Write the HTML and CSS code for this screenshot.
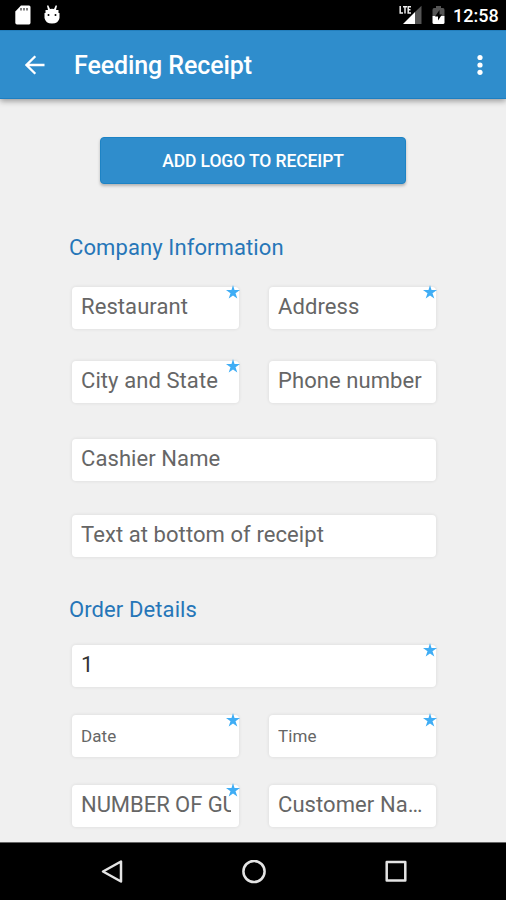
FILE: index.html
```html
<!DOCTYPE html>
<html lang="en">
<head>
<meta charset="utf-8">
<title>Feeding Receipt</title>
<link rel="stylesheet" href="styles.css">
</head>
<body>
<svg width="0" height="0" class="defs"><symbol id="star" viewBox="0 0 14 14"><path d="M7 0 8.500 5H14L9.500 8.200 11.300 13.500 7 10.400 2.700 13.500 4.500 8.200 0 5H5.500Z"/></symbol></svg>
<div class="screen">
  <div class="status">
    <svg class="sd" width="16" height="20" viewBox="0 0 16 20"><path fill="#fff" d="M6 .5H14Q15.500.5 15.500 2V17.500Q15.500 19.500 14 19.500H2Q.3 19.500.3 17.500V6.500Z"/><path d="M6 3V5.500M9 3V5.500M12 3V5.500" stroke="#555" stroke-width="1.500"/></svg>
    <svg class="bug" width="18" height="20" viewBox="0 0 18 20"><path fill="#fff" d="M4 .8 5.200.3 7 4Q9 3.500 11 4L12.800.3 14 .8 13 5H15.500V8H16.500V13Q15.500 18.500 9 18.500T1.500 13V8H2.500V5H5Z"/><circle cx="5.500" cy="10" r="1"/><circle cx="12.500" cy="10" r="1"/></svg>
    <span class="grow"></span>
    <svg width="24" height="20" viewBox="0 0 24 20"><path fill="#555" d="M16 7 22.500.8V19H16Z"/><path fill="#fff" d="M16 7V19H4Z"/><path d="M1.200 1V8H4M4 1.700H8M6 1.700V9M12 1.700H9.200V8H12M9.200 4.800H11.500" fill="none" stroke="#000" stroke-width="3"/><path d="M1.200 1V8H4M4 1.700H8M6 1.700V8.500M12 1.700H9.200V8H12M9.200 4.800H11.500" fill="none" stroke="#eee" stroke-width="1.500"/></svg>
    <svg class="bat" width="13" height="20" viewBox="0 0 13 20"><path fill="#555" d="M4 1H9V3H11Q12.500 3 12.500 5V11H.5V5Q.5 3 2 3H4Z"/><path fill="#fff" d="M.5 11H12.500V17.500Q12.500 19 11 19H2Q.5 19 .5 17.500Z"/><path d="M7.500 5 3 11.500H6V15.500L10 9.500H7.500Z"/></svg>
    <span class="time">12:58</span>
  </div>
  <header class="bar">
    <svg class="back" width="20" height="20" viewBox="0 0 20 20"><path d="M19.500 10H1.800M10.300 1.200 1.500 10 10.300 18.800" fill="none" stroke="#fff" stroke-width="2.300"/></svg>
    <h1>Feeding Receipt</h1>
    <svg width="6" height="22" viewBox="0 0 6 22" fill="#fff"><circle cx="3" cy="3.500" r="2.600"/><circle cx="3" cy="11" r="2.600"/><circle cx="3" cy="18.300" r="2.600"/></svg>
  </header>
  <main>
    <button class="logo">ADD LOGO TO RECEIPT</button>
    <h2>Company Information</h2>
    <div class="row first"><div class="field"><span>Restaurant</span><svg class="star"><use href="#star"/></svg></div><div class="field"><span>Address</span><svg class="star"><use href="#star"/></svg></div></div>
    <div class="row second"><div class="field"><span>City and State</span><svg class="star"><use href="#star"/></svg></div><div class="field"><span>Phone number</span></div></div>
    <div class="row third"><div class="field"><span>Cashier Name</span></div></div>
    <div class="row fourth"><div class="field"><span>Text at bottom of receipt</span></div></div>
    <h2 class="order">Order Details</h2>
    <div class="row number"><div class="field value"><span>1</span><svg class="star"><use href="#star"/></svg></div></div>
    <div class="row tight small"><div class="field"><span>Date</span><svg class="star"><use href="#star"/></svg></div><div class="field"><span>Time</span><svg class="star"><use href="#star"/></svg></div></div>
    <div class="row tight"><div class="field clip"><span>NUMBER OF GU</span><svg class="star"><use href="#star"/></svg></div><div class="field"><span>Customer Na…</span></div></div>
  </main>
  <nav>
    <svg width="22" height="24" viewBox="0 0 22 24"><path d="M20 1.500V21.500L2 11.500Z"/></svg>
    <svg width="24" height="24" viewBox="0 0 24 24"><circle cx="12" cy="11.500" r="10.600"/></svg>
    <svg width="22" height="24" viewBox="0 0 22 24"><rect x="1.700" y="2" width="18.600" height="18.600"/></svg>
  </nav>
</div>
</body>
</html>
```
FILE: styles.css
```css
* { box-sizing: border-box; }
body { margin: 0; font-family: Roboto, sans-serif; background: #f0f0f0; }
svg { display: block; flex: none; }
.defs { position: absolute; }
.screen { width: 506px; height: 900px; display: flex; flex-direction: column; overflow: hidden; }
.status { height: 30px; flex: none; background: #000; display: flex; align-items: center; padding: 0 9px 0 15px; color: #fff; }
.bug { margin-left: 12px; }
.grow { flex: 1; }
.bat { margin-left: 9px; }
.time { width: 44px; margin-left: 8px; font-size: 18px; font-weight: 500; line-height: 30px; padding-top: 2px; white-space: nowrap; }
.bar { height: 69px; flex: none; background: #2f8dcc; border-top: 1px solid #237fbd; border-bottom: 1px solid #1d7fc2; box-shadow: 0 2px 6px rgba(0,0,0,.38); display: flex; align-items: center; padding: 0 23px 0 25px; z-index: 1; }
h1 { flex: 1; margin: 2px 0 0 29px; color: #fff; font-size: 25px; font-weight: 500; line-height: 32px; letter-spacing: -.1px; }
main { flex: 1; padding: 38px 70px 0 72px; background: #f0f0f0; min-height: 0; }
.logo { display: block; width: 306px; height: 47px; margin: 0 0 0 28px; padding: 1px 0 0; border: 1px solid #1d83c5; border-radius: 4px; background: #2f8dcc; color: #fff; font: 500 17.500px Roboto, sans-serif; letter-spacing: -.1px; box-shadow: 0 2px 3px rgba(0,0,0,.25); }
h2 { margin: 49px 0 0 -3px; font-size: 22px; font-weight: 400; line-height: 30px; letter-spacing: .1px; color: #2676b8; }
.row { display: flex; gap: 30px; height: 42px; }
.first { margin-top: 24px; }
.second { margin-top: 32px; }
.third { margin-top: 36px; }
.fourth { margin-top: 34px; }
h2.order { margin-top: 38px; }
.number { margin-top: 20px; }
.tight { margin-top: 28px; }
.field { position: relative; flex: 1; min-width: 0; background: #fff; border-radius: 4px; box-shadow: 0 0 3px 1px rgba(0,0,0,.06); padding: 0 8px 0 9px; font-size: 22px; line-height: 40px; letter-spacing: .08px; color: #666; }
.field span { display: block; white-space: nowrap; overflow: hidden; text-overflow: ellipsis; }
.clip span { text-overflow: clip; letter-spacing: -.05px; }
.value { color: #333; }
.small .field { font-size: 17px; line-height: 43px; }
.star { position: absolute; top: -2px; right: -1px; width: 14px; height: 14px; fill: #3fadf5; }
nav { height: 58px; flex: none; background: #000; border-top: 1px solid #666; display: flex; justify-content: space-between; align-items: center; padding: 0 99px 0 101px; }
nav svg { fill: none; stroke: #e4e4e4; stroke-width: 2.500; stroke-linejoin: round; }
```
